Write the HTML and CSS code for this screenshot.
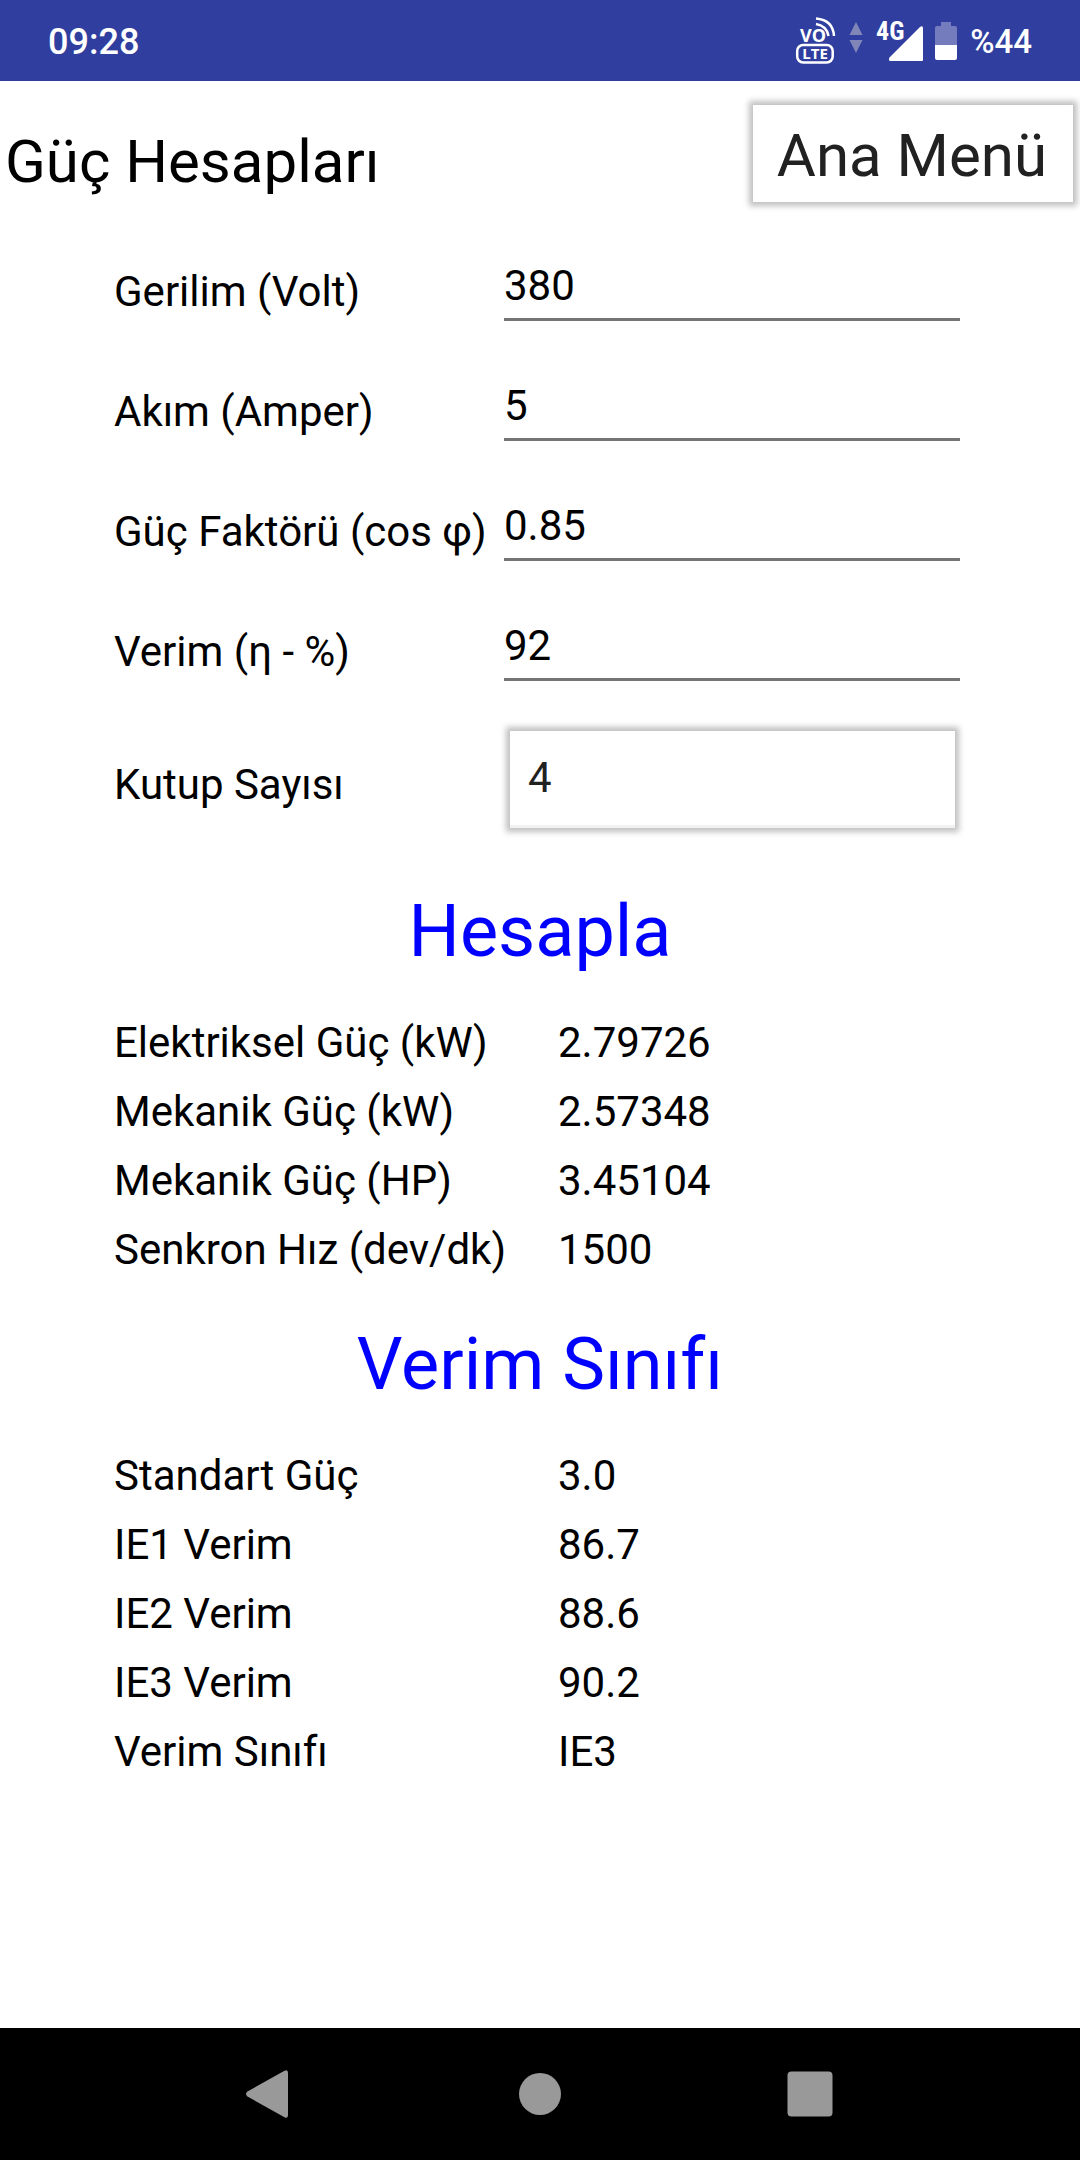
FILE: index.html
```html
<!DOCTYPE html>
<html lang="tr">
<head>
<meta charset="utf-8">
<meta name="viewport" content="width=device-width, initial-scale=1">
<title>Güç Hesapları</title>
<link rel="stylesheet" href="styles.css">
</head>
<body>
<div class="status">
  <span class="clock">09:28</span>
  <div class="indicators">
    <svg class="volte" width="40" height="48" viewBox="0 0 40 48" aria-label="VoLTE">
      <text class="volte-top" x="4" y="25">VO</text>
      <g fill="none" stroke="#fff" stroke-width="2.500">
        <path d="M20 1.500Q37 3 38 19"/>
        <path d="M20 7Q31 9 32.500 19"/>
        <rect x="1.200" y="28" width="35.500" height="17.500" rx="6"/>
      </g>
      <text class="volte-bottom" x="19" y="42" text-anchor="middle">LTE</text>
    </svg>
    <svg class="traffic" width="14" height="32" viewBox="0 0 14 32" fill="#8087b8" aria-hidden="true">
      <path d="M7 0L13.500 13H.5z"/><path d="M.5 18h13L7 31z"/>
    </svg>
    <svg class="signal" width="48" height="44" viewBox="0 0 48 44" aria-label="4G">
      <text class="network" x="1" y="23">4G</text>
      <path d="M44.500 10.500Q48 7.500 48 11.500V43Q48 44 47 44H15.500Q13 44 14.500 40.500z" fill="#fff"/>
    </svg>
    <svg class="battery" width="22" height="38" viewBox="0 0 22 38" aria-hidden="true">
      <path d="M6 0h10v4h4q2 0 2 2v17H0V6q0-2 2-2h4z" fill="#747cbe"/>
      <path d="M0 23h22v13q0 2-2 2H2q-2 0-2-2z" fill="#fff"/>
    </svg>
    <span class="percent">%44</span>
  </div>
</div>
<header class="header">
  <h1 class="title">Güç Hesapları</h1>
  <button class="menu raised" type="button">Ana Menü</button>
</header>
<main class="main">
  <form class="form">
    <div class="field"><label for="volt">Gerilim (Volt)</label><input id="volt" type="text" inputmode="decimal" value="380"></div>
    <div class="field"><label for="amper">Akım (Amper)</label><input id="amper" type="text" inputmode="decimal" value="5"></div>
    <div class="field"><label for="cos">Güç Faktörü (cos φ)</label><input id="cos" type="text" inputmode="decimal" value="0.85"></div>
    <div class="field"><label for="verim">Verim (η - %)</label><input id="verim" type="text" inputmode="decimal" value="92"></div>
    <div class="field field-select"><label for="kutup">Kutup Sayısı</label>
      <select id="kutup" class="raised"><option>2</option><option selected>4</option><option>6</option><option>8</option></select>
    </div>
    <button class="section" type="button">Hesapla</button>
  </form>
  <table class="results">
    <tr><th scope="row">Elektriksel Güç (kW)</th><td>2.79726</td></tr>
    <tr><th scope="row">Mekanik Güç (kW)</th><td>2.57348</td></tr>
    <tr><th scope="row">Mekanik Güç (HP)</th><td>3.45104</td></tr>
    <tr><th scope="row">Senkron Hız (dev/dk)</th><td>1500</td></tr>
  </table>
  <h2 class="section">Verim Sınıfı</h2>
  <table class="results">
    <tr><th scope="row">Standart Güç</th><td>3.0</td></tr>
    <tr><th scope="row">IE1 Verim</th><td>86.7</td></tr>
    <tr><th scope="row">IE2 Verim</th><td>88.6</td></tr>
    <tr><th scope="row">IE3 Verim</th><td>90.2</td></tr>
    <tr><th scope="row">Verim Sınıfı</th><td>IE3</td></tr>
  </table>
</main>
<nav class="nav">
  <button type="button" aria-label="Geri"><svg width="48" height="48" viewBox="0 0 48 48" fill="#999"><path d="M38.500.8Q42 -1 42 3V45Q42 49 38.500 47.200L1.500 26.500Q-1.500 24 1.500 21.500z"/></svg></button>
  <button type="button" aria-label="Ana ekran"><svg width="48" height="48" viewBox="0 0 48 48" fill="#999"><circle cx="24" cy="24" r="21"/></svg></button>
  <button type="button" aria-label="Son uygulamalar"><svg width="48" height="48" viewBox="0 0 48 48" fill="#999"><rect x="1.500" y="1.500" width="45" height="45" rx="4"/></svg></button>
</nav>
</body>
</html>
```
FILE: styles.css
```css
* {
  box-sizing: border-box;
}

body {
  display: flex;
  flex-direction: column;
  min-height: 100vh;
  margin: 0;
  background: #fff;
  color: #000;
  font-family: Roboto, sans-serif;
  font-size: 42px;
}

button,
input,
select {
  margin: 0;
  border: 0;
  border-radius: 0;
  background: none;
  color: inherit;
  font: inherit;
  outline: 0;
}

.status {
  display: flex;
  align-items: center;
  justify-content: space-between;
  height: 81px;
  padding: 0 48px;
  background: #303f9f;
  color: #fff;
  font-size: 36px;
  font-weight: 500;
}

.clock {
  padding-top: 3px;
}

.indicators {
  display: flex;
  align-items: center;
}

.indicators svg {
  overflow: visible;
}

.traffic {
  margin: 0 12px 6px 13px;
}

.signal {
  margin-bottom: 4px;
}

.battery {
  margin: 0 13px 0 12px;
}

.percent {
  padding-top: 2px;
  font-size: 33px;
}

.volte text,
.signal text {
  fill: #fff;
  font-weight: 700;
}

.volte-top {
  font-family: "Open Sans", sans-serif;
  font-size: 18px;
}

.volte-bottom {
  font-family: "Open Sans", sans-serif;
  font-size: 15px;
}

.network {
  font-family: "Roboto Condensed", "Liberation Sans Narrow", Roboto, sans-serif;
  font-size: 26px;
}

.header {
  display: flex;
  align-items: center;
  justify-content: space-between;
  padding: 24px 7px 30px 5px;
  font-size: 60px;
}

.title {
  margin: 0;
  padding-top: 16px;
  font-size: 60px;
  font-weight: 400;
}

.raised {
  background: #fff;
  color: #212121;
  box-shadow: 0 0 6px 4px rgba(0, 0, 0, 0.25);
}

.menu {
  height: 97px;
  padding: 4px 26px 0 24px;
}

.main {
  flex: 1;
  padding: 0 120px 0 114px;
}

.field {
  display: grid;
  grid-template-columns: 390px 1fr;
  align-items: center;
  height: 120px;
}

.field label {
  padding-bottom: 2px;
}

.field input {
  width: 100%;
  height: 68px;
  margin-bottom: 10px;
  padding: 0;
  border-bottom: 3px solid #757575;
}

.field-select {
  height: 139px;
}

.field-select label {
  padding: 6px 0 0;
}

.field select {
  height: 97px;
  margin: 0 5px 4px 6px;
  padding: 0 18px 2px;
  border-bottom: 3px solid #f2f2f2;
  appearance: none;
}

.section {
  display: block;
  width: 100%;
  height: 157px;
  margin: 0;
  padding: 4px 0 0 6px;
  color: #00f;
  font-size: 72px;
  font-weight: 400;
  line-height: 153px;
  text-align: center;
}

.results {
  width: 100%;
  border-collapse: collapse;
  table-layout: fixed;
}

.results th,
.results td {
  height: 69px;
  padding: 0;
  font-weight: 400;
  text-align: left;
}

.results th {
  width: 444px;
}

.nav {
  display: grid;
  grid-template-columns: repeat(3, 1fr);
  height: 132px;
  padding: 0 12.5%;
  background: #000;
}

.nav button {
  display: grid;
  place-items: center;
}
```
